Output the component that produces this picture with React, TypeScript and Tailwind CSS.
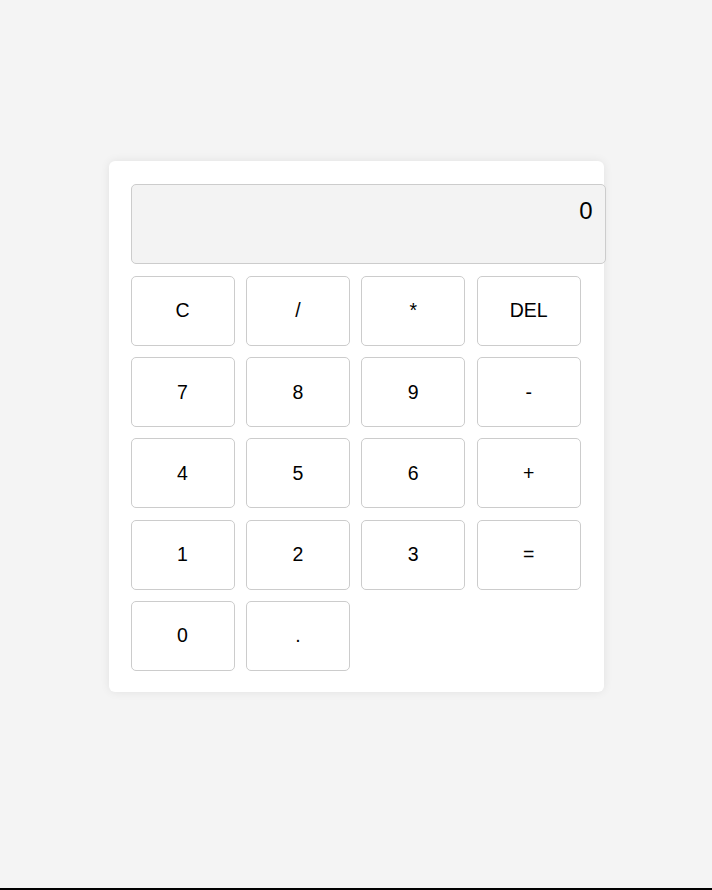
import React from 'react';

const keys = ['C', '/', '*', 'DEL', '7', '8', '9', '-', '4', '5', '6', '+', '1', '2', '3', '=', '0', '.'];

const App = () => {
  return (
    <div className="h-[890px] bg-[#f4f4f4] flex flex-col font-['Liberation_Sans',Arial,sans-serif] text-black">
      <div className="flex-1 pt-[161px]">
        {/* Calculator card */}
        <div className="w-[495px] mx-auto bg-white rounded-[6px] shadow-[0_0_10px_rgba(0,0,0,0.08)] pl-[22px] pt-[23px] pb-[21px]">
          <div className="w-[475px] h-[80px] bg-[#f3f3f3] border border-[#cccccc] rounded-[5px] px-[12px] pt-[8px] text-right text-[24px]">
            0
          </div>
          <div className="w-[450px] mt-[12px] grid grid-cols-[repeat(4,104px)] gap-x-[11.4px] gap-y-[11.2px]">
            {keys.map((k) => (
              <button
                key={k}
                className="h-[70px] bg-white border border-[#cccccc] rounded-[5px] text-[19.5px] flex items-center justify-center"
              >
                {k}
              </button>
            ))}
          </div>
        </div>
      </div>
      <div className="h-[2px] bg-black" />
    </div>
  );
};

export default App;
